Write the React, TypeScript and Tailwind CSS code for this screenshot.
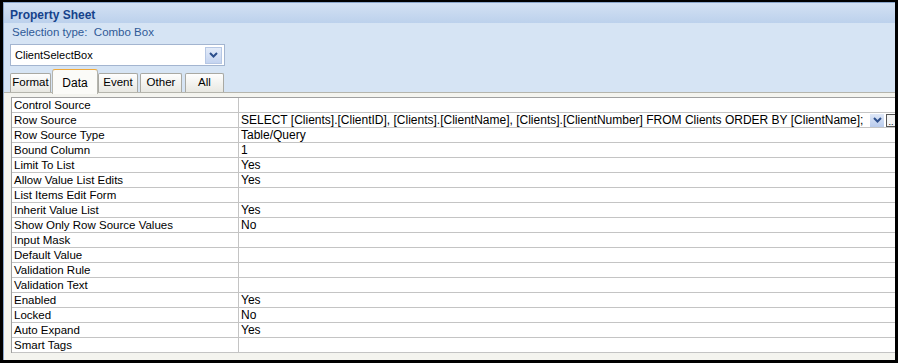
const rows: [string, string][] = [
  ["Control Source", ""],
  [
    "Row Source",
    "SELECT [Clients].[ClientID], [Clients].[ClientName], [Clients].[ClientNumber] FROM Clients ORDER BY [ClientName];",
  ],
  ["Row Source Type", "Table/Query"],
  ["Bound Column", "1"],
  ["Limit To List", "Yes"],
  ["Allow Value List Edits", "Yes"],
  ["List Items Edit Form", ""],
  ["Inherit Value List", "Yes"],
  ["Show Only Row Source Values", "No"],
  ["Input Mask", ""],
  ["Default Value", ""],
  ["Validation Rule", ""],
  ["Validation Text", ""],
  ["Enabled", "Yes"],
  ["Locked", "No"],
  ["Auto Expand", "Yes"],
  ["Smart Tags", ""],
];

const tabs = ["Format", "Data", "Event", "Other", "All"];

const Chevron = () => (
  <svg width="9" height="6" viewBox="0 0 9 6">
    <path d="M1 1 L4.5 4.5 L8 1" fill="none" stroke="#2d4f8c" strokeWidth="2" />
  </svg>
);

export default function App() {
  return (
    <div
      className="w-[898px] h-[363px] bg-black pt-[2px] pl-[3px] pr-[3px] pb-[3px] text-[11px] text-black"
      style={{ fontFamily: '"Liberation Sans", Arial, sans-serif' }}
    >
      <div className="flex h-full flex-col border-l border-t border-[#8aa6cc] bg-[#d6e4f4]">
        <div className="h-[20px] bg-gradient-to-b from-[#d3e1f3] to-[#bcd1ec] pl-[6px] pt-[3px] text-[12px] font-bold text-[#15428b]">
          Property Sheet
        </div>
        <div className="h-[16px] pl-[8px] pt-[1px] text-[11.5px] text-[#2f5a97]">
          Selection type:&nbsp; Combo Box
        </div>
        <div className="pl-[6px] pt-[5px]">
          <div className="flex h-[22px] w-[215px] items-center justify-between border border-[#a3b5d0] bg-white pl-[4px] pr-[2px]">
            <span>ClientSelectBox</span>
            <div className="flex h-[17px] w-[17px] items-center justify-center border border-[#b6c7e4] bg-gradient-to-b from-[#e3ebf9] to-[#c4d4f0]">
              <Chevron />
            </div>
          </div>
        </div>
        <div className="mt-[2px] flex h-[24px] items-end pl-[6px]">
          {tabs.map((t) => {
            const active = t === "Data";
            return active ? (
              <div
                key={t}
                className="relative z-10 -mb-[2px] flex h-[25px] w-[46px] items-start justify-center rounded-t-[3px] border border-b-0 border-[#b5b5ad] border-t-[#f0a93b] bg-[#fbfbf8] pt-[4px] text-[12px]"
              >
                {t}
              </div>
            ) : (
              <div
                key={t}
                className={`flex h-[19px] items-center justify-center rounded-t-[2px] border border-b-0 border-[#a9a9a3] bg-gradient-to-b from-[#fefefe] to-[#e8e8e2] text-[11.5px] ${
                  t === "Format"
                    ? "w-[41px] mr-[1px]"
                    : t === "Event"
                    ? "w-[40px] mr-[2px]"
                    : t === "Other"
                    ? "w-[42px] mr-[3px]"
                    : "w-[39px]"
                }`}
              >
                {t}
              </div>
            );
          })}
        </div>
        <div className="flex-1 border-t border-[#b5b5ad] bg-[#f4f4ef] pl-[7px] pt-[4px]">
          <div className="border-l border-t border-[#a0a0a0] bg-white">
            {rows.map(([label, value]) => (
              <div key={label} className="flex h-[15px] border-b border-[#c4c4c4]">
                <div className="w-[227px] shrink-0 border-r border-[#c4c4c4] pl-[2px] text-[11.5px] leading-[14px]">
                  {label}
                </div>
                <div className="flex flex-1 items-center justify-between overflow-hidden pl-[2px] text-[12px] leading-[14px]">
                  <span className="whitespace-nowrap">{value}</span>
                  {label === "Row Source" && (
                    <div className="flex items-center gap-[2px]">
                      <div className="flex h-[13px] w-[14px] items-center justify-center bg-gradient-to-b from-[#dfe8f8] to-[#b9cbec]">
                        <Chevron />
                      </div>
                      <div className="flex h-[13px] w-[9px] items-end justify-center border border-r-0 border-[#555] bg-[#f4f4f4] pb-[1px] text-[9px] leading-[6px]">
                        ..
                      </div>
                    </div>
                  )}
                </div>
              </div>
            ))}
          </div>
        </div>
      </div>
    </div>
  );
}
